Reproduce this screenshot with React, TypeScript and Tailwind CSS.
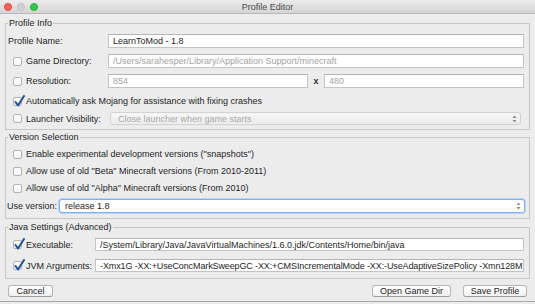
function Check({ checked = false }: { checked?: boolean }) {
  return (
    <span className="relative w-[9px] h-[9px] shrink-0 rounded-[2px] border border-[#b3b3b3] bg-gradient-to-b from-white to-[#f3f3f3]">
      {checked && (
        <svg className="absolute left-[0px] top-[-3px]" width="11" height="12" viewBox="0 0 11 12">
          <path d="M1.5 7 L4 10.5 L10 1" fill="none" stroke="#1f4f9c" strokeWidth="2" strokeLinecap="round" strokeLinejoin="round" />
        </svg>
      )}
    </span>
  )
}

function Field({ value, muted = false, className = '' }: { value: string; muted?: boolean; className?: string }) {
  return (
    <div
      className={`h-full flex items-center border border-[#c4c4c4] border-t-[#b4b4b4] bg-white pl-[4px] overflow-hidden whitespace-nowrap ${
        muted ? 'text-[#a3a3a3]' : 'text-[#1e1e1e]'
      } ${className}`}
    >
      {value}
    </div>
  )
}

function Arrows() {
  return (
    <svg width="5" height="8" viewBox="0 0 5 8">
      <path d="M2.5 0.5 L4.5 3 L0.5 3 Z" fill="#8a8a8a" />
      <path d="M2.5 7.5 L4.5 5 L0.5 5 Z" fill="#8a8a8a" />
    </svg>
  )
}

function Button({ label, className = '' }: { label: string; className?: string }) {
  return (
    <div
      className={`h-[12px] flex items-center justify-center rounded-[3px] border border-[#b5b5b5] border-b-[#9d9d9d] bg-gradient-to-b from-white to-[#f1f1f1] text-[#1e1e1e] ${className}`}
    >
      {label}
    </div>
  )
}

export default function App() {
  return (
    <div className="w-[535px] h-[304px] overflow-hidden bg-[#ececec] font-['Liberation_Sans',Arial,sans-serif] text-[9px] leading-[12px] text-[#1e1e1e]">
      <div className="relative h-[14px] flex items-center justify-center border-b border-[#b8b8b8] bg-gradient-to-b from-[#ececec] to-[#d4d4d4]">
        <div className="absolute left-[4px] top-[3px] flex gap-[5px]">
          <span className="w-[8px] h-[8px] rounded-full bg-[#fc605c] border border-[#e2463f]" />
          <span className="w-[8px] h-[8px] rounded-full bg-[#d0d0d0] border border-[#c2c2c2]" />
          <span className="w-[8px] h-[8px] rounded-full bg-[#34c84a] border border-[#2aac3d]" />
        </div>
        <span className="text-[#4a4a4a]">Profile Editor</span>
      </div>

      <fieldset className="min-w-0 mx-[5px] mt-[3px] border border-[#c6c6c6] px-[2px] pt-[5px] pb-[4px]">
        <legend className="px-[1px] leading-[12px]">Profile Info</legend>
        <div className="flex flex-col gap-[6px] pr-[3px]">
          <div className="h-[14px] flex items-center">
            <span className="w-[100px] shrink-0">Profile Name:</span>
            <div className="flex-1 min-w-0 h-full">
              <Field value="LearnToMod - 1.8" />
            </div>
          </div>
          <div className="h-[14px] flex items-center">
            <div className="w-[100px] shrink-0 flex items-center gap-[4px] pl-[5px]">
              <Check />
              <span>Game Directory:</span>
            </div>
            <div className="flex-1 min-w-0 h-full">
              <Field value="/Users/sarahesper/Library/Application Support/minecraft" muted />
            </div>
          </div>
          <div className="h-[14px] flex items-center">
            <div className="w-[100px] shrink-0 flex items-center gap-[4px] pl-[5px]">
              <Check />
              <span>Resolution:</span>
            </div>
            <div className="w-[200px] h-full">
              <Field value="854" muted />
            </div>
            <span className="w-[16px] text-center font-bold text-[#333]">x</span>
            <div className="flex-1 min-w-0 h-full">
              <Field value="480" muted />
            </div>
          </div>
          <div className="h-[14px] flex items-center gap-[4px] pl-[5px]">
            <Check checked />
            <span>Automatically ask Mojang for assistance with fixing crashes</span>
          </div>
          <div className="h-[13px] flex items-center -mt-[2px]">
            <div className="w-[102px] shrink-0 flex items-center gap-[4px] pl-[5px]">
              <Check />
              <span>Launcher Visibility:</span>
            </div>
            <div className="flex-1 min-w-0 h-full mr-[3px] flex items-center justify-between rounded-[3px] border border-[#d2d2d2] bg-gradient-to-b from-[#f7f7f7] to-[#ececec] pl-[7px] pr-[3px] text-[#a9a9a9]">
              <span>Close launcher when game starts</span>
              <Arrows />
            </div>
          </div>
        </div>
      </fieldset>

      <fieldset className="min-w-0 mx-[5px] mt-[1px] border border-[#c6c6c6] px-[2px] pt-[4px] pb-[5px]">
        <legend className="px-[1px] leading-[12px]">Version Selection</legend>
        <div className="flex flex-col gap-[3px] pr-[2px]">
          <div className="h-[14px] flex items-center gap-[4px] pl-[5px]">
            <Check />
            <span>Enable experimental development versions ("snapshots")</span>
          </div>
          <div className="h-[14px] flex items-center gap-[4px] pl-[5px]">
            <Check />
            <span>Allow use of old "Beta" Minecraft versions (From 2010-2011)</span>
          </div>
          <div className="h-[14px] flex items-center gap-[4px] pl-[5px]">
            <Check />
            <span>Allow use of old "Alpha" Minecraft versions (From 2010)</span>
          </div>
          <div className="h-[14px] flex items-center mt-[1px]">
            <span className="w-[52px] shrink-0 -ml-[1px]">Use version:</span>
            <div className="flex-1 min-w-0 h-full flex items-center justify-between rounded-[3px] border border-[#7db0ee] bg-white pl-[5px] pr-[3px] shadow-[0_0_0_1px_#b9d5f7]">
              <span>release 1.8</span>
              <Arrows />
            </div>
          </div>
        </div>
      </fieldset>

      <fieldset className="min-w-0 mx-[5px] mt-[2px] border border-[#c6c6c6] px-[2px] pt-[5px] pb-[6px]">
        <legend className="px-[1px] leading-[12px]">Java Settings (Advanced)</legend>
        <div className="flex flex-col gap-[8px] pr-[3px]">
          <div className="h-[13px] flex items-center">
            <div className="w-[87px] shrink-0 flex items-center gap-[4px] pl-[5px]">
              <Check checked />
              <span>Executable:</span>
            </div>
            <div className="flex-1 min-w-0 h-full">
              <Field value="/System/Library/Java/JavaVirtualMachines/1.6.0.jdk/Contents/Home/bin/java" />
            </div>
          </div>
          <div className="h-[13px] flex items-center">
            <div className="w-[87px] shrink-0 flex items-center gap-[4px] pl-[5px]">
              <Check checked />
              <span>JVM Arguments:</span>
            </div>
            <div className="flex-1 min-w-0 h-full">
              <Field
                className="pl-[2px] tracking-[-0.12px]"
                value="-Xmx1G -XX:+UseConcMarkSweepGC -XX:+CMSIncrementalMode -XX:-UseAdaptiveSizePolicy -Xmn128M"
              />
            </div>
          </div>
        </div>
      </fieldset>

      <div className="mt-[6px] px-[8px] flex items-center">
        <Button label="Cancel" className="w-[45px]" />
        <div className="flex-1" />
        <Button label="Open Game Dir" className="w-[79px]" />
        <Button label="Save Profile" className="w-[64px] ml-[12px]" />
      </div>
      <div className="mt-[4px] h-[1px] bg-[#a9a9a9]" />
    </div>
  )
}
